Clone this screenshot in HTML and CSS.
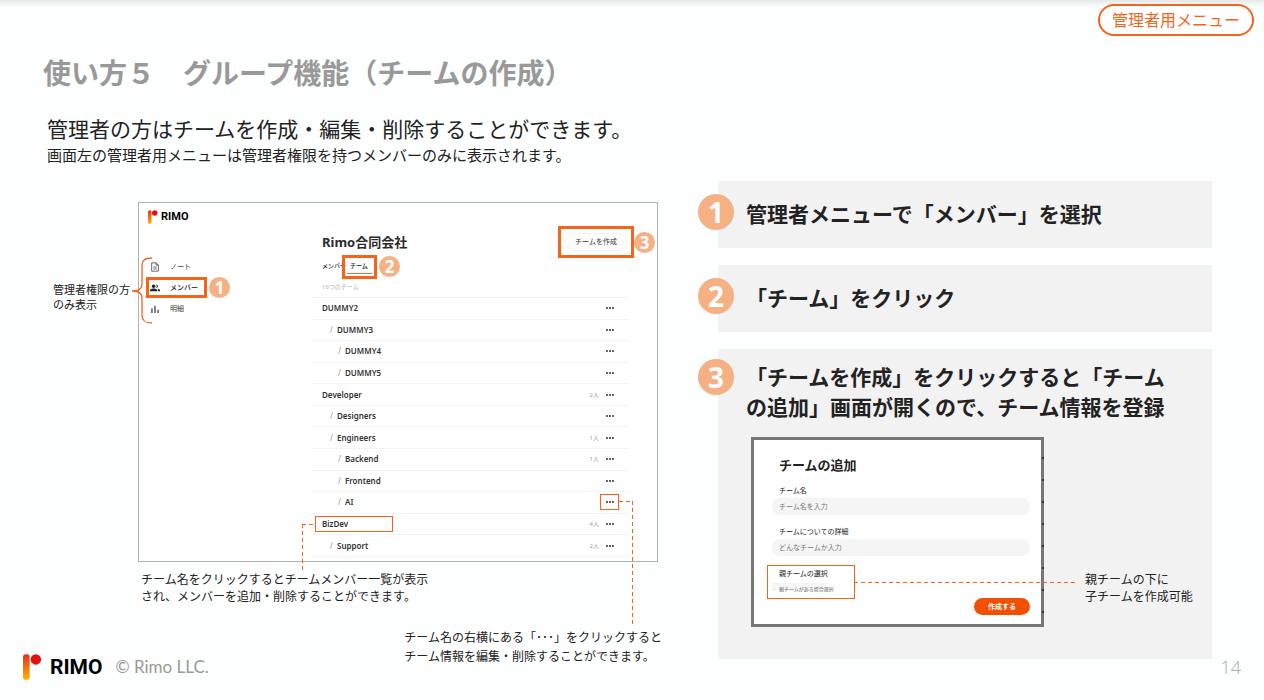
FILE: index.html
```html
<!DOCTYPE html>
<html lang="ja">
<head>
<meta charset="utf-8">
<meta name="viewport" content="width=device-width, initial-scale=1">
<title>使い方５ グループ機能（チームの作成）</title>
<link rel="stylesheet" href="styles.css">
</head>
<body>
<div class="slide">
  <header class="topbar"><span class="audience">管理者用メニュー</span></header>
  <div class="intro">
    <h1 class="title">使い方５　グループ機能（チームの作成）</h1>
    <p class="lead">管理者の方はチームを作成・編集・削除することができます。</p>
    <p class="sublead">画面左の管理者用メニューは管理者権限を持つメンバーのみに表示されます。</p>
  </div>

  <main class="columns">
    <section class="demo">
      <p class="side-note">管理者権限の方<br>のみ表示</p>
      <div class="demo-body">
        <div class="app">
          <div class="sidebar">
            <div class="brand brand-small">
              <svg class="mark" viewBox="0 0 20 27" aria-hidden="true"><defs><linearGradient id="stem-s" x1="0" y1="0" x2="0" y2="1"><stop offset="0" stop-color="#e3301b"/><stop offset="1" stop-color="#ffb400"/></linearGradient></defs><rect width="7" height="27" rx="3" fill="url(#stem-s)"/><circle cx="13.500" cy="5.500" r="5.500" fill="#e60f0a"/></svg>
              <span>RIMO</span>
            </div>
            <nav class="nav">
              <a class="nav-item" href="#note"><svg class="nav-icon" viewBox="0 0 18 18" aria-hidden="true"><path d="M3 1.500h8l4 4v11H3zM11 1.500v4h4M6 9h6M6 12.500h6" fill="none" stroke="#555" stroke-width="1.600"/></svg>ノート</a>
              <a class="nav-item current" href="#member"><svg class="nav-icon" viewBox="0 0 18 18" aria-hidden="true"><circle cx="6.500" cy="6" r="3.200" fill="#222"/><path d="M0 15v-2c0-2 4-3 6.500-3s6.500 1 6.500 3v2z" fill="#222"/><path d="M11 2.800a3.200 3.200 0 0 1 0 6.400 5 5 0 0 0 0-6.400zM13 10.200c2.500.3 5 1.200 5 2.800v2h-3.500v-2c0-1.200-.6-2.100-1.500-2.800z" fill="#222"/></svg>メンバー<span class="badge badge-nav">1</span></a>
              <a class="nav-item" href="#bill"><svg class="nav-icon" viewBox="0 0 18 18" aria-hidden="true"><path d="M3.500 8v8M9 3v13M14.500 10.500V16" stroke="#555" stroke-width="2.600"/></svg>明細</a>
              <svg class="brace" viewBox="0 0 22 67" aria-hidden="true"><path d="M21 1C14 1 11 3 11 9v18c0 4-2 7-10 7 8 0 10 3 10 7v17c0 6 3 8 10 8" fill="none" stroke="#f4651b" stroke-width="1.300"/></svg>
            </nav>
          </div>
          <div class="content">
            <div class="content-head">
              <h2 class="company">Rimo合同会社</h2>
              <div class="create-focus"><button class="create" type="button">チームを作成</button><span class="badge badge-create">3</span></div>
            </div>
            <div class="tabs">
              <a class="tab" href="#member">メンバー</a>
              <a class="tab tab-active" href="#team">チーム<span class="badge badge-tab">2</span></a>
            </div>
            <p class="team-count">16つのチーム</p>
            <ul class="teams">
              <li class="team"><a class="name" href="#t1">DUMMY2</a><button class="more" type="button" aria-label="メニュー"></button></li>
              <li class="team level-1"><a class="name" href="#t2">DUMMY3</a><button class="more" type="button" aria-label="メニュー"></button></li>
              <li class="team level-2"><a class="name" href="#t3">DUMMY4</a><button class="more" type="button" aria-label="メニュー"></button></li>
              <li class="team level-2"><a class="name" href="#t4">DUMMY5</a><button class="more" type="button" aria-label="メニュー"></button></li>
              <li class="team"><a class="name" href="#t5">Developer</a><span class="people">2人</span><button class="more" type="button" aria-label="メニュー"></button></li>
              <li class="team level-1"><a class="name" href="#t6">Designers</a><button class="more" type="button" aria-label="メニュー"></button></li>
              <li class="team level-1"><a class="name" href="#t7">Engineers</a><span class="people">1人</span><button class="more" type="button" aria-label="メニュー"></button></li>
              <li class="team level-2"><a class="name" href="#t8">Backend</a><span class="people">1人</span><button class="more" type="button" aria-label="メニュー"></button></li>
              <li class="team level-2"><a class="name" href="#t9">Frontend</a><button class="more" type="button" aria-label="メニュー"></button></li>
              <li class="team level-2"><a class="name" href="#t10">AI</a><button class="more more-focus" type="button" aria-label="メニュー"></button></li>
              <li class="team"><a class="name name-focus" href="#t11">BizDev</a><span class="people">4人</span><button class="more" type="button" aria-label="メニュー"></button></li>
              <li class="team level-1"><a class="name" href="#t12">Support</a><span class="people">2人</span><button class="more" type="button" aria-label="メニュー"></button></li>
            </ul>
          </div>
        </div>
        <p class="caption caption-name">チーム名をクリックするとチームメンバー一覧が表示<br>され、メンバーを追加・削除することができます。</p>
        <p class="caption caption-more">チーム名の右横にある「･･･」をクリックすると<br>チーム情報を編集・削除することができます。</p>
      </div>
    </section>

    <ol class="steps">
      <li class="step"><span class="badge badge-step">1</span><p class="step-text">管理者メニューで「メンバー」を選択</p></li>
      <li class="step"><span class="badge badge-step">2</span><p class="step-text">「チーム」をクリック</p></li>
      <li class="step step-tall"><span class="badge badge-step">3</span>
        <p class="step-text">「チームを作成」をクリックすると「チーム<br>の追加」画面が開くので、チーム情報を登録</p>
        <div class="dialog-row">
          <form class="dialog">
            <h3 class="dialog-title">チームの追加</h3>
            <label class="label" for="team-name">チーム名</label>
            <input class="field" id="team-name" type="text" placeholder="チーム名を入力">
            <label class="label" for="team-detail">チームについての詳細</label>
            <input class="field" id="team-detail" type="text" placeholder="どんなチームか入力">
            <div class="parent-focus">
              <label class="parent-label" for="parent">親チームの選択</label>
              <select class="parent" id="parent"><option>親チームがある場合選択</option></select>
            </div>
            <button class="submit" type="button">作成する</button>
          </form>
          <p class="caption dialog-note">親チームの下に<br>子チームを作成可能</p>
        </div>
      </li>
    </ol>
  </main>

  <footer class="footer">
    <div class="brand">
      <svg class="mark" viewBox="0 0 20 27" aria-hidden="true"><defs><linearGradient id="stem" x1="0" y1="0" x2="0" y2="1"><stop offset="0" stop-color="#e3301b"/><stop offset="1" stop-color="#ffb400"/></linearGradient></defs><rect width="7" height="27" rx="3" fill="url(#stem)"/><circle cx="13.500" cy="5.500" r="5.500" fill="#e60f0a"/></svg>
      <span>RIMO</span>
    </div>
    <span class="copyright">© Rimo LLC.</span>
    <span class="page-number">14</span>
  </footer>
</div>
</body>
</html>
```
FILE: styles.css
```css
* { box-sizing: border-box; }
body, h1, h2, h3, p, ul, ol { margin: 0; padding: 0; }
ul, ol { list-style: none; }
a { color: inherit; text-decoration: none; }
button, input, select { font: inherit; margin: 0; padding: 0; border: 0; background: none; }

body {
  background: #fdfefe;
  color: #222;
  font-family: "Noto Sans", "Noto Sans CJK JP", sans-serif;
}
.slide {
  min-height: 100vh;
  background: linear-gradient(#e6e8e8, #fdfefe) top / 100% 7px no-repeat;
}

.topbar { display: flex; justify-content: flex-end; padding: 4px 10px 0; }
.audience {
  padding: 0 12px;
  border: 2px solid #f4651b;
  border-radius: 16px;
  background: #fff;
  color: #f4651b;
  font-size: 16px;
  line-height: 28px;
}
.intro { padding: 17px 43px 0; }
.title { color: #999; font-size: 28px; line-height: 40px; font-weight: 700; }
.lead { margin: 21px 4px 0; font-size: 21px; line-height: 30px; }
.sublead { margin-left: 4px; font-size: 15px; line-height: 22px; }

.columns {
  display: grid;
  grid-template-columns: minmax(0, 605fr) minmax(0, 514fr);
  gap: 40px;
  padding: 15px 52px 0 53px;
}

.badge {
  position: absolute;
  display: flex;
  align-items: center;
  justify-content: center;
  width: 21px;
  height: 21px;
  border-radius: 50%;
  background: #f5b183;
  color: #fff;
  font-size: 17px;
  line-height: 20px;
  font-weight: 700;
}

/* Annotated application view */
.demo { display: grid; grid-template-columns: 85px minmax(0, 1fr); padding-top: 21px; }
.side-note { padding-top: 80px; font-size: 11px; line-height: 15px; }
.app { display: flex; min-height: 360px; border: 1px solid #b0b3b3; background: #fff; }
.sidebar { flex: 0 0 173px; padding: 6px 7px; }
.brand { display: flex; align-items: center; gap: 8px; color: #000; font-family: Roboto, sans-serif; font-size: 21px; line-height: 26px; font-weight: 700; }
.mark { width: 19px; height: 26px; }
.brand-small { gap: 3px; padding-left: 2px; font-size: 11px; line-height: 15px; }
.brand-small .mark { width: 10px; height: 14px; }

.nav { position: relative; margin-top: 32px; }
.nav-item {
  position: relative;
  display: flex;
  align-items: center;
  gap: 10px;
  width: 61px;
  height: 21px;
  padding-left: 1px;
  border: 3px solid transparent;
  color: #444;
  font-size: 7px;
  line-height: 10px;
  white-space: nowrap;
}
.current { border-color: #f4651b; color: #111; font-weight: 500; }
.nav-icon { width: 10px; height: 10px; }
.badge-nav { left: 60px; top: -3px; }
.brace { position: absolute; left: -15px; top: 1px; width: 22px; height: 67px; }

.content { flex: 1; display: flex; flex-direction: column; padding: 23px 28px 4px 0; }
.content-head { display: flex; align-items: center; justify-content: space-between; margin-right: -5px; padding-left: 10px; }
.company { font-size: 13px; line-height: 16px; font-weight: 700; color: #2a2a2a; }
.create-focus { position: relative; padding: 4px; border: 3px solid #f4651b; }
.create { display: block; width: 62px; border: 1px solid #f1f1f1; border-radius: 9px; font-size: 7px; line-height: 16px; color: #333; }
.badge-create { left: 73px; top: 3px; }
.tabs { display: flex; align-items: center; margin-top: -3px; padding-left: 10px; font-size: 6px; font-weight: 500; }
.tab { line-height: 16px; padding-bottom: 2px; }
.tab-active { position: relative; margin-left: -4px; padding: 0 6px 2px 5px; border: 3px solid #f4651b; }
.tab-active::after { content: ""; position: absolute; left: 2px; right: 2px; bottom: 2px; height: 1px; background: #ee6c42; }
.badge-tab { left: 34px; top: -2px; }
.team-count { margin: 3px 0 5px; padding-left: 10px; color: #b5b5b5; font-size: 6px; line-height: 10px; }

.teams { flex: 1; display: flex; flex-direction: column; border-bottom: 1px solid #f5f5f5; }
.team { flex: 1; display: flex; align-items: center; padding: 0 10px; border-top: 1px solid #f3f3f3; }
.level-1 { padding-left: 18px; }
.level-2 { padding-left: 26px; }
.level-1::before, .level-2::before { content: "/"; width: 7px; color: #999; font-size: 8px; line-height: 12px; }
.name { margin-right: auto; color: #333; font-size: 8px; line-height: 12px; font-weight: 600; }
.people { margin-right: 1px; color: #999; font-size: 6px; line-height: 10px; }
.more {
  position: relative;
  width: 19px;
  height: 16px;
  background: repeating-linear-gradient(90deg, #666 0 2px, transparent 2px 3px) center / 8px 2px no-repeat;
}
.more-focus { outline: 1px solid #f4651b; outline-offset: -1px; }
.name-focus { position: relative; width: 78px; height: 16px; margin-left: -7px; padding: 1px 6px; border: 1px solid #f4651b; }

/* Dashed leader lines from a highlighted control to its caption */
.more-focus::after, .name-focus::before {
  content: "";
  position: absolute;
  top: 7px;
  width: 14px;
  --h: repeating-linear-gradient(90deg, #f4651b 0 4px, transparent 4px 7px);
  --v: repeating-linear-gradient(#f4651b 0 4px, transparent 4px 7px);
}
.more-focus::after { left: 100%; height: 124px; background: var(--h) top / 100% 1px no-repeat, var(--v) right / 1px 100% no-repeat; }
.name-focus::before { right: 100%; height: 48px; background: var(--h) top / 100% 1px no-repeat, var(--v) left / 1px 100% no-repeat; }

.caption { font-size: 12px; line-height: 17px; }
.caption-name { padding: 9px 3px 0; }
.caption-more { width: max-content; margin: 0 -4px 0 auto; padding-top: 23px; line-height: 19px; }

/* Numbered steps */
.steps { display: flex; flex-direction: column; gap: 17px; padding-left: 20px; }
.step { position: relative; padding: 18px 28px 19px; background: #f2f2f2; }
.badge-step { left: -20px; top: 13px; width: 36px; height: 36px; font-size: 28px; line-height: 36px; }
.step-text { font-size: 21px; line-height: 30px; font-weight: 700; }
.step-tall { padding: 13px 0 32px 28px; }
.step-tall .badge-step { top: 10px; }
.dialog-row { display: flex; align-items: flex-end; gap: 41px; padding: 15px 0 0 5px; }
.dialog {
  display: flex;
  flex-direction: column;
  flex: 0 0 293px;
  padding: 16px 11px 9px 18px;
  border: 3px solid transparent;
  background:
    linear-gradient(#fff, #fff) padding-box,
    repeating-linear-gradient(transparent 0 20px, #333 20px 22px) right / 2px 100% no-repeat border-box,
    linear-gradient(#777, #777) border-box;
}
.dialog-title { padding-left: 7px; font-size: 13px; line-height: 18px; font-weight: 700; }
.label { margin-top: 11px; padding-left: 7px; font-size: 7px; line-height: 12px; }
.field { width: 100%; margin-top: 1px; padding: 0 7px; border-radius: 8px; background: #f5f5f5; font-size: 7px; line-height: 12px; height: 17px; color: #777; }
.field::placeholder { color: #777; opacity: 1; }
.parent-focus { position: relative; width: 88px; height: 34px; margin: 9px 0 0 -5px; padding: 2px 0 0 4px; border: 1px solid #f4651b; }
.parent-focus::after { content: ""; position: absolute; left: 100%; top: 16px; width: 221px; height: 1px; background: repeating-linear-gradient(90deg, #f4651b 0 4px, transparent 4px 7px); }
.parent-label { display: block; padding-left: 7px; font-size: 7px; line-height: 12px; }
.parent { display: block; width: 76px; height: 12px; margin-top: 3px; padding-left: 7px; appearance: none; background: linear-gradient(#f5f5f5, #f5f5f5) left top / 54px 8px no-repeat; color: #666; font-size: 5px; line-height: 10px; }
.submit { align-self: flex-end; width: 56px; margin-top: -1px; border-radius: 9px; background: #f25000; color: #fff; font-size: 7px; line-height: 17px; font-weight: 700; }
.dialog-note { padding-bottom: 22px; white-space: nowrap; }

.footer { display: flex; align-items: center; margin-top: -12px; padding: 0 23px; }
.copyright { margin-left: 13px; color: #999; font-family: Lato, sans-serif; font-size: 17px; line-height: 26px; }
.page-number { margin-left: auto; color: #aaa; font-family: "Open Sans", sans-serif; font-size: 18px; line-height: 26px; font-weight: 300; }
```
